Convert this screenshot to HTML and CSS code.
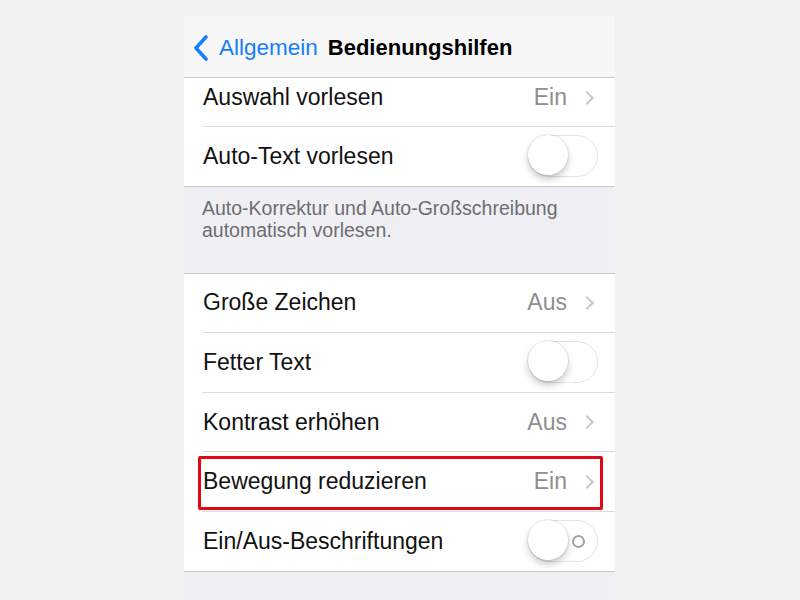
FILE: index.html
```html
<!DOCTYPE html>
<html lang="de">
<head>
    <meta charset="UTF-8">
    <title>Bedienungshilfen</title>
    <link rel="stylesheet" href="styles.css">
</head>
<body>
    <div class="phone">
        <header class="navbar">
            <a class="back" href="#">
                <svg class="back-icon" width="18" height="26" viewBox="0 0 18 26">
                    <path d="M14 2 L4 13 L14 24" fill="none" stroke="#157efb" stroke-width="3.6" stroke-linecap="round" stroke-linejoin="round"/>
                </svg>
                <span>Allgemein</span>
            </a>
            <h1>Bedienungshilfen</h1>
        </header>

        <div class="scroller">
            <ul class="group group-first">
                <li class="row">
                    <span class="label">Auswahl vorlesen</span>
                    <span class="value">Ein</span>
                    <span class="chevron"></span>
                </li>
                <li class="row">
                    <span class="label">Auto-Text vorlesen</span>
                    <span class="switch"><span class="knob"></span></span>
                </li>
            </ul>
            <p class="footer">Auto-Korrektur und Auto-Großschreibung automatisch vorlesen.</p>

            <ul class="group">
                <li class="row">
                    <span class="label">Große Zeichen</span>
                    <span class="value">Aus</span>
                    <span class="chevron"></span>
                </li>
                <li class="row">
                    <span class="label">Fetter Text</span>
                    <span class="switch"><span class="knob"></span></span>
                </li>
                <li class="row">
                    <span class="label">Kontrast erhöhen</span>
                    <span class="value">Aus</span>
                    <span class="chevron"></span>
                </li>
                <li class="row highlighted">
                    <span class="label">Bewegung reduzieren</span>
                    <span class="value">Ein</span>
                    <span class="chevron"></span>
                </li>
                <li class="row">
                    <span class="label">Ein/Aus-Beschriftungen</span>
                    <span class="switch labels"><span class="knob"></span><span class="off-mark"></span></span>
                </li>
            </ul>
        </div>
    </div>
</body>
</html>
```

FILE: styles.css
```css
body {
    margin: 0;
    background-color: #f2f2f2;
    font-family: "Liberation Sans", Arial, sans-serif;
}
.phone {
    width: 431px;
    height: 584px;
    margin: 16px 0 0 184px;
    background-color: #efeff4;
    overflow: hidden;
    display: flex;
    flex-direction: column;
}
.navbar {
    height: 62px;
    flex-shrink: 0;
    background-color: #f7f7f7;
    border-bottom: 1px solid #c8c7cc;
    display: flex;
    align-items: center;
    padding: 2px 0 0 8px;
    box-sizing: border-box;
    position: relative;
    z-index: 1;
}
.back {
    display: flex;
    align-items: center;
    color: #157efb;
    text-decoration: none;
    font-size: 22.5px;
}
.back-icon {
    margin-right: 9px;
}
.navbar h1 {
    margin: 0 0 0 10px;
    font-size: 22px;
    font-weight: bold;
    color: #000;
}
.scroller {
    flex: 1;
    overflow: hidden;
}
.group {
    list-style: none;
    margin: 0;
    padding: 0;
    background-color: #fff;
    border-top: 1px solid #c8c7cc;
    border-bottom: 1px solid #c8c7cc;
}
.group-first {
    margin-top: -9px;
    border-top: none;
}
.row {
    height: 58.6px;
    margin-left: 18px;
    padding-right: 19px;
    display: flex;
    align-items: center;
    border-bottom: 1px solid #dcdce0;
    font-size: 23px;
    color: #111;
    position: relative;
}
.group-first .row:first-child {
    height: 57px;
}
.row:last-child {
    border-bottom: none;
}
.label {
    flex: 1;
    padding-left: 1px;
}
.value {
    color: #8e8e93;
    margin-right: 15px;
}
.chevron {
    width: 8px;
    height: 8px;
    border-top: 2px solid #c7c7cc;
    border-right: 2px solid #c7c7cc;
    transform: rotate(45deg);
    margin-right: 4px;
}
.switch {
    width: 68px;
    height: 40px;
    border: 1.5px solid #e3e3e6;
    border-radius: 22px;
    background-color: #fff;
    position: relative;
    margin-right: -2px;
}
.knob {
    position: absolute;
    left: -1px;
    top: -1px;
    width: 40px;
    height: 40px;
    border-radius: 50%;
    background-color: #fff;
    box-shadow: 0 4px 7px rgba(0, 0, 0, 0.22), 0 0 0 1px rgba(0, 0, 0, 0.07);
}
.off-mark {
    position: absolute;
    right: 12px;
    top: 14px;
    width: 9px;
    height: 9px;
    border: 2px solid #a2a2a6;
    border-radius: 50%;
}
.footer {
    margin: 0;
    padding: 10px 19px 32px 18px;
    font-size: 19.5px;
    line-height: 22px;
    color: #6d6d72;
}
.highlighted::before {
    content: "";
    position: absolute;
    left: -4px;
    right: 12px;
    top: 4px;
    bottom: 1px;
    border: 3px solid #e30613;
    border-radius: 2px;
}
```
